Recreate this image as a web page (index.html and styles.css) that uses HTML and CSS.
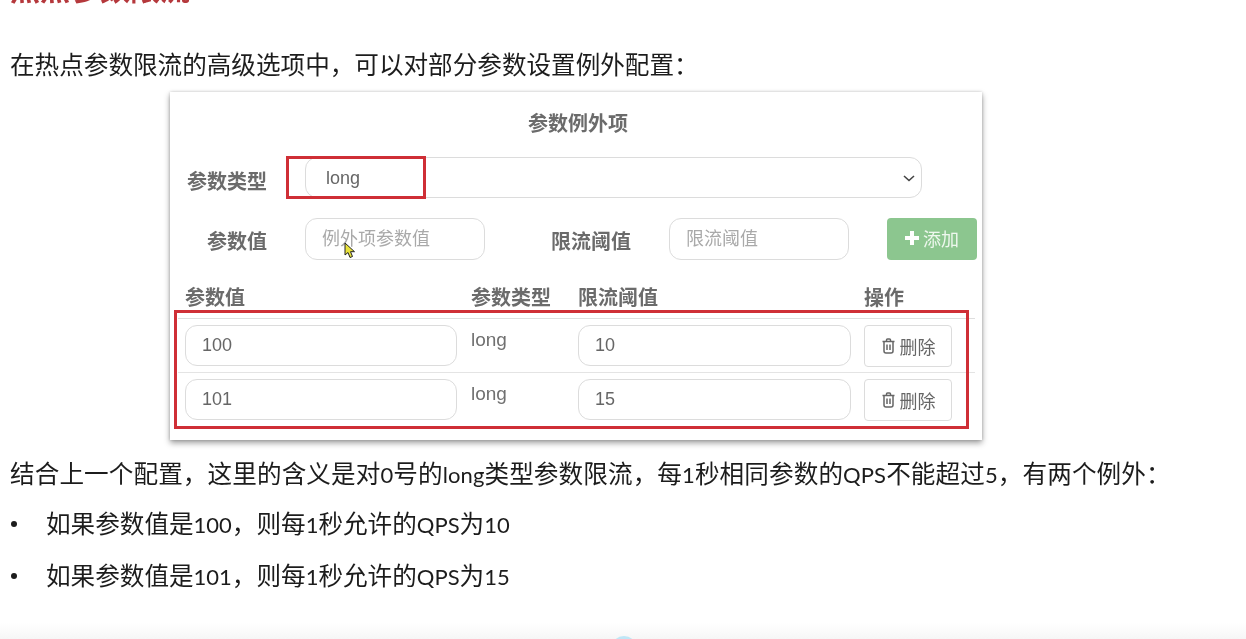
FILE: index.html
```html
<!DOCTYPE html>
<html lang="zh-CN">
<head>
<meta charset="utf-8">
<title>热点参数限流</title>
<link rel="stylesheet" href="styles.css">
</head>
<body>
<div class="page">
  <main class="doc">
    <h2 class="heading">热点参数限流</h2>
    <p class="intro">在热点参数限流的高级选项中，可以对部分参数设置例外配置：</p>
    <section class="card">
      <h3 class="card-title">参数例外项</h3>
      <div class="form">
        <label class="form-label">参数类型</label>
        <div class="select-wrap">
          <select class="control select-control"><option>long</option></select>
          <svg class="chevron" viewBox="0 0 12 7"><path d="M1 1l5 4.500 5-4.500"/></svg>
        </div>
        <label class="form-label">参数值</label>
        <input class="control" placeholder="例外项参数值">
        <label class="form-label">限流阈值</label>
        <input class="control" placeholder="限流阈值">
        <button class="add-btn"><svg class="plus" viewBox="0 0 14 14"><path d="M5 0h4v5h5v4H9v5H5V9H0V5h5z"/></svg>添加</button>
      </div>
      <div class="table">
        <div class="row head">
          <div class="cell">参数值</div><div class="cell">参数类型</div><div class="cell">限流阈值</div><div class="cell">操作</div>
        </div>
        <div class="row">
          <div class="cell"><input class="control wide" value="100"></div>
          <div class="cell type">long</div>
          <div class="cell"><input class="control wide" value="10"></div>
          <div class="cell"><button class="del-btn"><svg class="trash" viewBox="0 0 14 16"><path d="M1 3.5h12M5 3.5V2a1 1 0 0 1 1-1h2a1 1 0 0 1 1 1v1.500M2.500 3.500V13a2 2 0 0 0 2 2h5a2 2 0 0 0 2-2V3.500M5.500 6.500v5.500M8.500 6.500v5.500"/></svg>删除</button></div>
        </div>
        <div class="row">
          <div class="cell"><input class="control wide" value="101"></div>
          <div class="cell type">long</div>
          <div class="cell"><input class="control wide" value="15"></div>
          <div class="cell"><button class="del-btn"><svg class="trash" viewBox="0 0 14 16"><path d="M1 3.5h12M5 3.5V2a1 1 0 0 1 1-1h2a1 1 0 0 1 1 1v1.500M2.500 3.500V13a2 2 0 0 0 2 2h5a2 2 0 0 0 2-2V3.500M5.500 6.500v5.500M8.500 6.500v5.500"/></svg>删除</button></div>
        </div>
      </div>
      <div class="mark mark-type"></div>
      <div class="mark mark-rows"></div>
      <svg class="cursor" viewBox="0 0 12 17"><path d="M1 1l0 12 3-2.500 2 5 2.500-1-2-4.800 4 0z"/></svg>
    </section>
    <p class="summary">结合上一个配置，这里的含义是对<span class="latin">0</span>号的<span class="latin">long</span>类型参数限流，每<span class="latin">1</span>秒相同参数的<span class="latin">QPS</span>不能超过<span class="latin">5</span>，有两个例外：</p>
    <ul class="list">
      <li>如果参数值是<span class="latin">100</span>，则每<span class="latin">1</span>秒允许的<span class="latin">QPS</span>为<span class="latin">10</span></li>
      <li>如果参数值是<span class="latin">101</span>，则每<span class="latin">1</span>秒允许的<span class="latin">QPS</span>为<span class="latin">15</span></li>
    </ul>
  </main>
  <footer class="strip"><span class="arc"></span></footer>
</div>
</body>
</html>
```
FILE: styles.css
```css
* { box-sizing: border-box; }
html, body { margin: 0; height: 100%; overflow: hidden; background: #fff; }
.page {
  height: 639px;
  display: flex;
  flex-direction: column;
  overflow: hidden;
  font-family: "Noto Sans CJK SC", sans-serif;
  filter: blur(0.35px);
}
.doc { flex: 1; padding-left: 10px; color: #1c1c1c; font-family: Lato, "Noto Sans CJK SC", sans-serif; font-size: 24.6px; }
.latin { font-size: 22px; }
.heading {
  margin: -27px 0 0;
  height: 30px;
  line-height: 30px;
  font-size: 30px;
  font-weight: 700;
  color: #b5383c;
}
.intro { margin: 45px 0 0; height: 34px; line-height: 34px; }
.card {
  position: relative;
  width: 812px;
  height: 348px;
  margin: 10px 0 0 160px;
  background: #fff;
  color: #666;
  font-family: "Liberation Sans", "Noto Sans CJK SC", sans-serif;
  box-shadow: 0 3px 6px rgba(0,0,0,.38), 0 0 3px rgba(0,0,0,.18);
}
.card-title {
  margin: 0 0 0 2px;
  padding: 18px 0 0 2px;
  width: 810px;
  height: 65px;
  line-height: 28px;
  text-align: center;
  font-size: 20px;
  font-weight: 700;
  color: #6b6b6b;
}
.form {
  display: grid;
  grid-template-columns: 97px 180px 108px 180px 90px;
  grid-template-rows: 41px 42px;
  column-gap: 38px;
  row-gap: 20px;
}
.form-label {
  text-align: right;
  font-size: 20px;
  font-weight: 700;
  line-height: 48px;
  color: #6b6b6b;
}
.form-label:first-child { line-height: 50px; }
.control {
  width: 100%;
  height: 100%;
  border: 1.5px solid #dcdcdc;
  border-radius: 12px;
  background: #fff;
  color: #666;
  padding: 0 16px;
  font: 18px "Liberation Sans", "Noto Sans CJK SC", sans-serif;
  outline: none;
}
.control::placeholder { color: #a9a9a9; opacity: 1; }
.select-wrap { grid-column: 2 / 6; position: relative; width: 617px; }
.select-control { appearance: none; padding-left: 20px; }
.chevron {
  position: absolute;
  right: 7px;
  top: 18px;
  width: 12px;
  height: 7px;
  fill: none;
  stroke: #444;
  stroke-width: 1.6;
}
.add-btn {
  border: 0;
  border-radius: 4px;
  background: #8cc68f;
  color: #eef7ee;
  font: 18px "Liberation Sans", "Noto Sans CJK SC", sans-serif;
  display: flex;
  align-items: center;
  justify-content: center;
  gap: 4px;
  padding: 0 0 3px;
}
.plus { width: 14px; height: 14px; fill: #fff; }
.table { margin: 22px 0 0 8px; width: 797px; }
.row {
  display: grid;
  grid-template-columns: 286px 107px 286px 118px;
  height: 54px;
  padding-top: 6px;
  border-bottom: 1px solid #e4e4e4;
}
.row:last-child { border-bottom: 0; }
.row.head {
  height: 37px;
  padding-top: 1px;
  line-height: 30px;
  font-size: 20px;
  font-weight: 700;
  color: #6b6b6b;
  border-bottom: 1.5px solid #dedede;
}
.cell { padding-left: 7px; }
.cell .wide { height: 41px; }
.row .cell:nth-child(1) .wide { width: 272px; }
.row .cell:nth-child(3) .wide { width: 273px; }
.type { font-size: 19px; line-height: 30px; color: #707070; }
.del-btn {
  width: 88px;
  height: 42px;
  border: 1.5px solid #dcdcdc;
  border-radius: 4px;
  background: #fff;
  color: #666;
  font: 18px "Liberation Sans", "Noto Sans CJK SC", sans-serif;
  display: flex;
  align-items: center;
  justify-content: center;
  gap: 4px;
  padding: 0;
}
.trash { width: 15px; height: 16px; fill: none; stroke: #666; stroke-width: 1.500; }
.mark { position: absolute; border: 3px solid #cf2f36; }
.mark-type { left: 116px; top: 64px; width: 140px; height: 43px; }
.mark-rows { left: 4px; top: 218px; width: 795px; height: 119px; }
.cursor {
  position: absolute;
  left: 174px;
  top: 150px;
  width: 12px;
  height: 17px;
  fill: #e8e23c;
  stroke: #222;
  stroke-width: 1;
}
.summary { margin: 17px 0 0; height: 34px; line-height: 34px; white-space: nowrap; letter-spacing: .1px; }
.list { list-style: none; margin: 16px 0 0; padding: 0; }
.list li { position: relative; height: 34px; line-height: 34px; padding-left: 36px; margin-bottom: 18px; }
.list li::before {
  content: "";
  position: absolute;
  left: 1px;
  top: 14px;
  width: 6px;
  height: 6px;
  border-radius: 50%;
  background: #1c1c1c;
}
.strip {
  position: relative;
  height: 16px;
  flex: none;
  overflow: hidden;
  background: linear-gradient(#fff, #f6f6f6);
}
.arc {
  position: absolute;
  left: 611px;
  top: 13px;
  width: 26px;
  height: 26px;
  border-radius: 50%;
  background: #bfe6f6;
}
```
